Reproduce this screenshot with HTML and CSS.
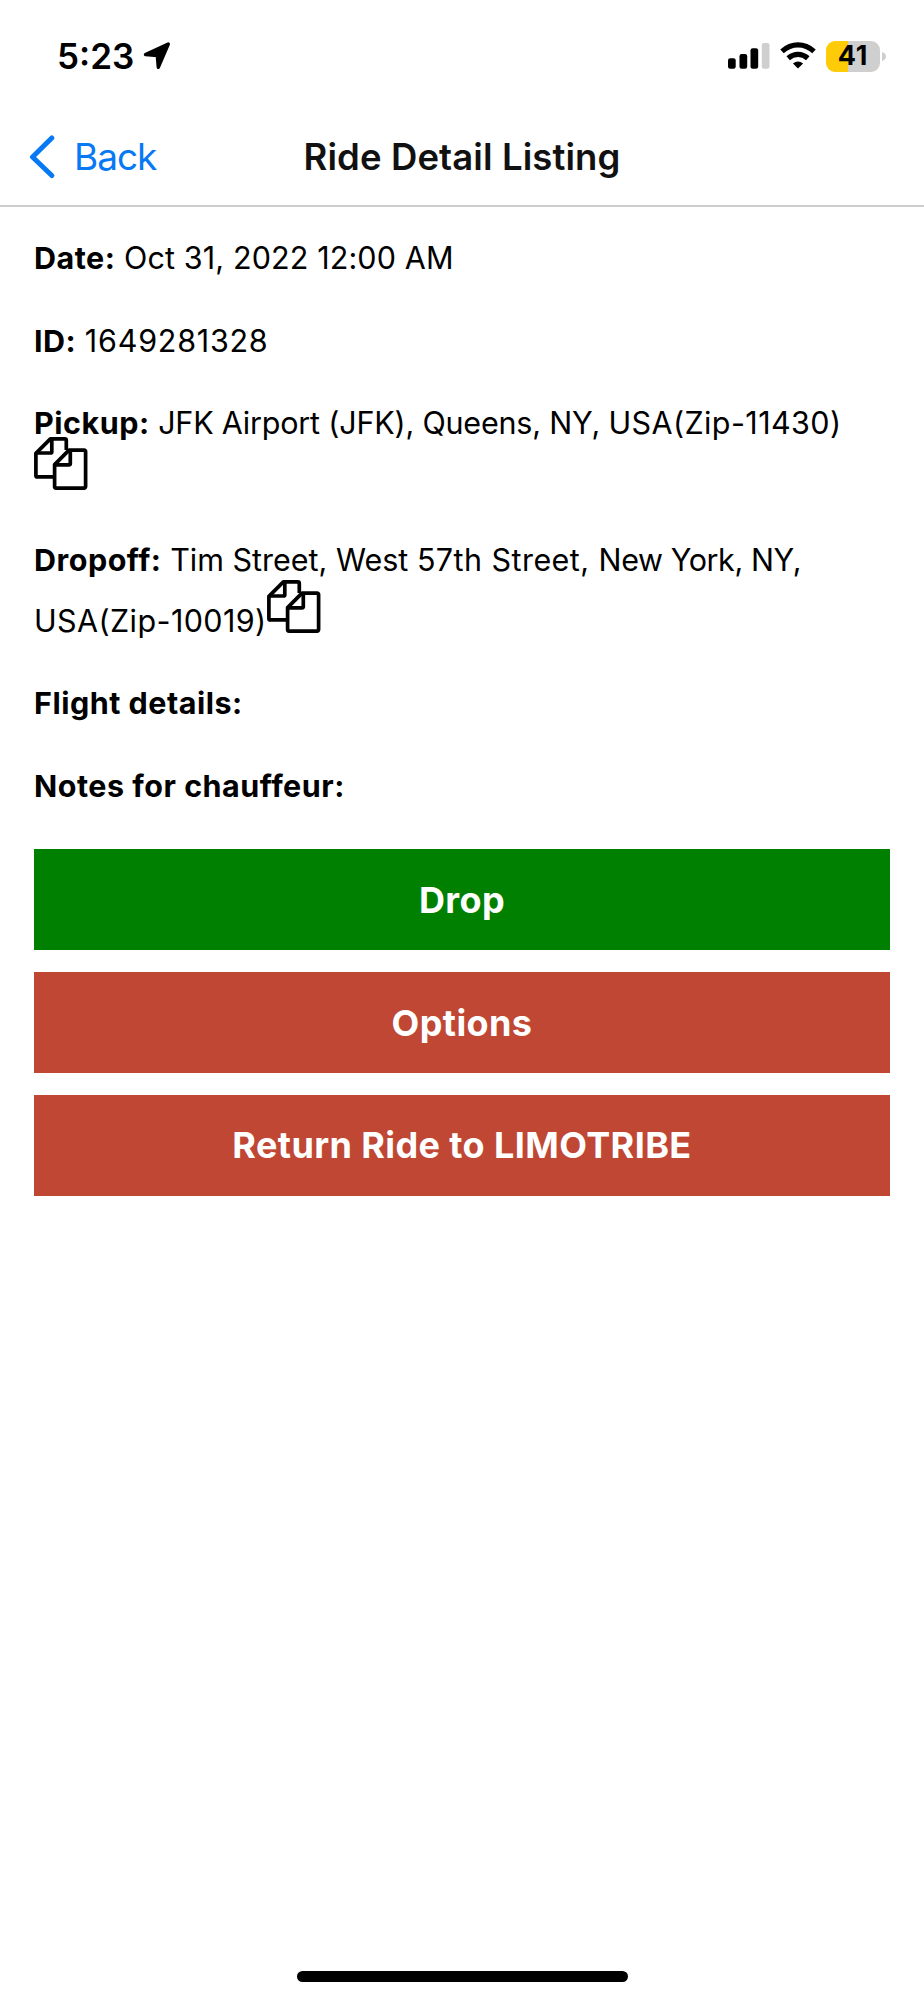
FILE: index.html
```html
<!DOCTYPE html>
<html lang="en">
<head>
<meta charset="utf-8">
<title>Ride Detail Listing</title>
<link rel="stylesheet" href="styles.css">
</head>
<body>
<svg class="defs" width="0" height="0" aria-hidden="true">
  <symbol id="copy" viewBox="0 0 54 54">
    <g fill="none" stroke="#000" stroke-width="3.7" stroke-linejoin="round">
      <path d="M20 39.9H3.4a1.5 1.5 0 0 1-1.5-1.5V16.4L16.4 1.9H30.8a1.5 1.5 0 0 1 1.5 1.5V13"/>
      <path d="M17.8 2V14.7a1.3 1.3 0 0 1-1.3 1.3H2"/>
      <path d="M20.6 27.6L35 13.1H50.1a1.5 1.5 0 0 1 1.5 1.5V49.6a1.5 1.5 0 0 1-1.5 1.5H22.1a1.5 1.5 0 0 1-1.5-1.5Z"/>
      <path d="M36.3 13.3V26.6a1.3 1.3 0 0 1-1.3 1.3H20.8"/>
    </g>
  </symbol>
</svg>
<div class="screen">
  <header class="status">
    <div class="clock">
      <span class="time">5:23</span>
      <svg class="location" width="28" height="28" viewBox="0 0 28 28"><path d="M25.3 2L2.5 12.6L14.3 13.6L15.3 25.4Z" fill="#000" stroke="#000" stroke-width="3.4" stroke-linejoin="round"/></svg>
    </div>
    <div class="indicators">
      <svg class="signal" width="42" height="26" viewBox="0 0 42 26">
        <rect x="0" y="15.3" width="7.7" height="10.4" rx="2.2"/>
        <rect x="11.5" y="11" width="7.7" height="14.7" rx="2.2"/>
        <rect x="22.5" y="5.2" width="7.7" height="20.5" rx="2.2"/>
        <rect x="33.8" y="0" width="7.7" height="25.7" rx="2.2" fill="#cfcfcf"/>
      </svg>
      <svg class="wifi" width="36" height="27" viewBox="0 0 36 27">
        <g fill="none" stroke="#000" stroke-width="5.2">
          <path d="M2 9.4Q9.2 2.9 18 2.9T34 9.4"/>
          <path d="M8.2 16.2Q12.6 12.3 18 12.3T27.8 16.2"/>
        </g>
        <path d="M18 26.6L12.9 21.4Q18 17.4 23.1 21.4Z"/>
      </svg>
      <div class="battery"><span class="level">41</span></div>
      <svg class="cap" width="4" height="9" viewBox="0 0 4 9"><path d="M0 0Q4 1.2 4 4.5T0 9Z" fill="#cfcfcf"/></svg>
    </div>
  </header>
  <nav class="navbar">
    <a class="back">
      <svg width="26" height="44" viewBox="0 0 26 44"><path d="M22.8 3L3.5 22L22.8 40.5" fill="none" stroke="#0879f5" stroke-width="5" stroke-linecap="round" stroke-linejoin="round"/></svg>
      <span class="back-label">Back</span>
    </a>
    <h1 class="title">Ride Detail Listing</h1>
  </nav>
  <main class="content">
    <div class="details">
      <p class="row"><b>Date:</b> <span class="date">Oct 31, 2022 12:00 AM</span></p>
      <p class="row"><b>ID:</b> <span class="number">1649281328</span></p>
      <div class="row">
        <p class="line"><b>Pickup:</b> <span class="place">JFK Airport (JFK), Queens, NY, </span><span class="zip">USA(Zip-11430)</span></p>
        <svg class="copy under" width="54" height="54"><use href="#copy"/></svg>
      </div>
      <div class="row">
        <p class="line"><b>Dropoff:</b> <span>Tim Street, West <span class="street">57th Street, </span><span class="city">New York, NY,</span></span></p>
        <div class="wrapped"><span class="zip">USA(Zip-10019)</span><svg class="copy beside" width="54" height="54"><use href="#copy"/></svg></div>
      </div>
      <p class="row"><b>Flight details:</b></p>
      <p class="row"><b>Notes for chauffeur:</b></p>
    </div>
    <div class="actions">
      <button class="btn go">Drop</button>
      <button class="btn">Options</button>
      <button class="btn">Return Ride to LIMOTRIBE</button>
    </div>
  </main>
  <footer class="home"><div class="home-bar"></div></footer>
</div>
</body>
</html>
```
FILE: styles.css
```css
* { box-sizing: border-box; }
body { margin: 0; background: #fff; color: #000; font-family: Inter, "Liberation Sans", sans-serif; }
p, h1 { margin: 0; }
.defs { display: block; position: absolute; }
.screen { width: 924px; height: 2000px; display: flex; flex-direction: column; overflow: hidden; }

.status { height: 112px; padding: 0 38px 0 57px; display: flex; justify-content: space-between; align-items: center; }
.clock { display: flex; align-items: center; gap: 9px; }
.time { font-size: 35px; line-height: 40px; font-weight: 600; }
.indicators { display: flex; align-items: center; }
.signal { margin-top: -1px; }
.wifi { margin: -1px 0 0 10px; }
.battery { width: 54px; height: 31px; margin-left: 10px; border-radius: 9px; background: linear-gradient(90deg, #fdcb08 41%, #cfcfcf 41%); display: flex; align-items: center; justify-content: center; }
.level { font-size: 27px; line-height: 30px; font-weight: 700; letter-spacing: 0.8px; }
.cap { margin-left: 2px; }

.navbar { height: 95px; padding: 0 29px 4px; border-bottom: 2px solid #cdcdcd; display: grid; grid-template-columns: 1fr auto 1fr; align-items: center; }
.back { display: flex; align-items: center; gap: 19px; color: #0879f5; }
.back-label { font-size: 37px; line-height: 44px; letter-spacing: -1px; }
.title { font-size: 36.5px; line-height: 44px; font-weight: 600; letter-spacing: 0.1px; color: #111; white-space: nowrap; }

.content { flex: 1; padding: 31.4px 34px 0 34px; }
.details { display: flex; flex-direction: column; gap: 42.5px; font-size: 30.5px; line-height: 40px; white-space: nowrap; }
.row b { font-weight: 700; letter-spacing: 0.5px; }
.date { letter-spacing: 0.12px; }
.number { letter-spacing: 0.75px; }
.line { height: 40px; }
.place { letter-spacing: -0.2px; }
.street { letter-spacing: 0.45px; }
.city { letter-spacing: -0.4px; }
.copy { display: block; flex: none; }
.under { margin-top: -6px; margin-bottom: 6px; }
.wrapped { height: 61px; display: flex; }
.zip { align-self: flex-end; letter-spacing: 0.4px; }
.beside { margin-top: 0.5px; }

.actions { display: flex; flex-direction: column; gap: 21.75px; margin-top: 43.4px; }
.btn { height: 101px; border: 0; padding: 0; background: #bf4734; color: #fff; font-family: inherit; font-size: 36px; line-height: 44px; font-weight: 700; letter-spacing: 0.4px; }
.go { background: #008000; }

.home { height: 35px; display: flex; justify-content: center; align-items: flex-start; padding-top: 6px; }
.home-bar { width: 331px; height: 11px; border-radius: 6px; background: #000; }
```
